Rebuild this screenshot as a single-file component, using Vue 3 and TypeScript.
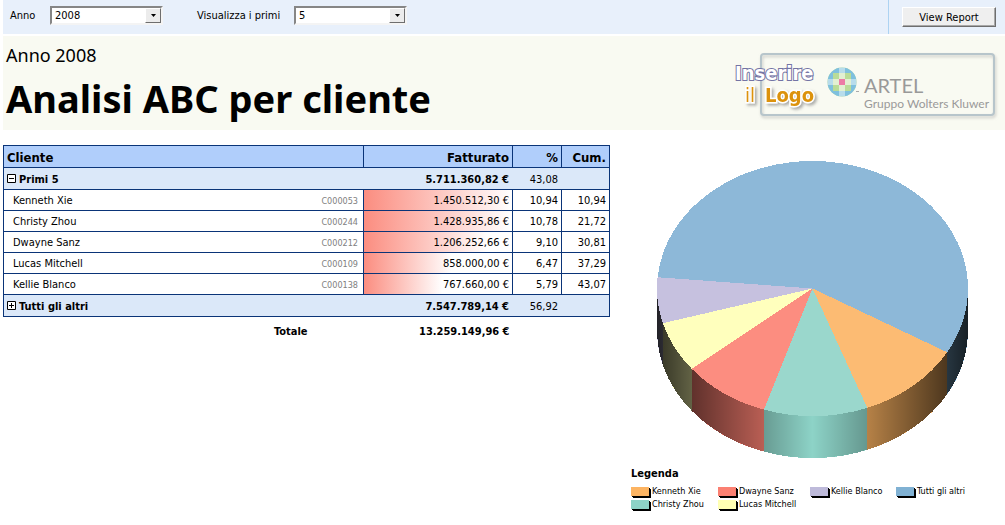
<script setup lang="ts">
import { computed, ref } from 'vue'

interface Customer {
  name: string
  code: string
  revenue: string
  amount: number
  share: string
  cumulative: string
  color: string
  top: string
}

const year = ref('2008')
const topCount = ref('5')
const expanded = ref(true)
const othersExpanded = ref(false)

const customers: Customer[] = [
  { name: 'Kenneth Xie', code: 'C000053', revenue: '1.450.512,30 €', amount: 1450512.3, share: '10,94', cumulative: '10,94', color: '#fdb462', top: '#fcbb73' },
  { name: 'Christy Zhou', code: 'C000244', revenue: '1.428.935,86 €', amount: 1428935.86, share: '10,78', cumulative: '21,72', color: '#8dd3c7', top: '#9ad7cc' },
  { name: 'Dwayne Sanz', code: 'C000212', revenue: '1.206.252,66 €', amount: 1206252.66, share: '9,10', cumulative: '30,81', color: '#fb8072', top: '#fc8d80' },
  { name: 'Lucas Mitchell', code: 'C000109', revenue: '858.000,00 €', amount: 858000, share: '6,47', cumulative: '37,29', color: '#ffffb3', top: '#ffffbd' },
  { name: 'Kellie Blanco', code: 'C000138', revenue: '767.660,00 €', amount: 767660, share: '5,79', cumulative: '43,07', color: '#bebada', top: '#c6c1df' },
]

const segments = [
  ...customers.map(({ name, amount, color, top }) => ({ name, amount, color, top })),
  { name: 'Tutti gli altri', amount: 7547789.14, color: '#80b1d3', top: '#8db8d8' },
]

const legendColumns = [segments.slice(0, 2), segments.slice(2, 4), segments.slice(4, 5), segments.slice(5)]

const maxAmount = Math.max(...customers.map((c) => c.amount))
const barWidth = (amount: number) => `${(amount / maxAmount) * 100}%`

// Pie geometry, in viewBox units; angles grow clockwise from the right.
const cx = 155.5
const cy = 127.5
const rx = 155.5
const ry = 127.5
const depth = 42
const startAngle = 30

const point = (deg: number, drop = 0) => {
  const r = (deg * Math.PI) / 180
  return `${(cx + rx * Math.cos(r)).toFixed(2)} ${(cy + drop + ry * Math.sin(r)).toFixed(2)}`
}

const wall = (from: number, to: number) =>
  `M${point(from)} A${rx} ${ry} 0 0 1 ${point(to)} V${cy + depth + ry * Math.sin((to * Math.PI) / 180)} A${rx} ${ry} 0 0 0 ${point(from, depth)} Z`

const slices = computed(() => {
  const total = segments.reduce((sum, s) => sum + s.amount, 0)
  let angle = startAngle
  return segments.map((s) => {
    const from = angle
    const to = from + (s.amount / total) * 360
    angle = to
    const large = to - from > 180 ? 1 : 0
    return {
      ...s,
      face: `M${cx} ${cy} L${point(from)} A${rx} ${ry} 0 ${large} 1 ${point(to)} Z`,
      side: from < 180 ? wall(from, Math.min(to, 180)) : wall(0, startAngle),
    }
  })
})
const front = wall(0, 180)
</script>

<template>
  <div class="report">
    <form class="toolbar" @submit.prevent>
      <div class="params">
        <label for="year">Anno</label>
        <span class="combo">
          <select id="year" v-model="year">
            <option>2008</option>
            <option>2007</option>
          </select>
          <span class="drop" aria-hidden="true"><svg width="7" height="4" viewBox="0 0 7 4"><path d="M1 0H6L3.500 3Z" /></svg></span>
        </span>
        <label for="top" class="second">Visualizza i primi</label>
        <span class="combo">
          <select id="top" v-model="topCount">
            <option>5</option>
            <option>10</option>
          </select>
          <span class="drop" aria-hidden="true"><svg width="7" height="4" viewBox="0 0 7 4"><path d="M1 0H6L3.500 3Z" /></svg></span>
        </span>
      </div>
      <div class="action">
        <button type="submit" class="view">View Report</button>
      </div>
    </form>

    <header class="banner">
      <div>
        <p class="period">Anno {{ year }}</p>
        <h1>Analisi ABC per cliente</h1>
      </div>
      <svg class="logo" width="270" height="76" viewBox="0 0 270 76" role="img" aria-label="Inserire il Logo - ARTEL Gruppo Wolters Kluwer">
        <defs>
          <clipPath id="disc"><circle cx="112" cy="34" r="14.500" /></clipPath>
          <filter id="soft" x="-20%" y="-20%" width="150%" height="150%">
            <feDropShadow dx="2" dy="2" stdDeviation="1.500" flood-color="#777" flood-opacity="0.6" />
          </filter>
          <filter id="faint" x="-5%" y="-10%" width="112%" height="125%">
            <feDropShadow dx="1" dy="2" stdDeviation="1.500" flood-color="#999" flood-opacity="0.5" />
          </filter>
        </defs>
        <rect x="30" y="7" width="233" height="61" rx="3" fill="none" stroke="#b7c5cb" stroke-width="2" filter="url(#faint)" />
        <g transform="translate(-1 1)">
          <g clip-path="url(#disc)">
            <rect x="97" y="19" width="30" height="30" fill="#b9dc98" />
            <path d="M97 19H109V25H103V31H97ZM127 19V31H121V25H115V19ZM97 49V37H103V43H109V49ZM127 49H115V43H121V37H127Z" fill="#7fc0de" />
            <path d="M109 19H115V25H109ZM97 31H103V37H97ZM121 31H127V37H121ZM109 43H115V49H109Z" fill="#b7dceb" />
            <path d="M109 25H115V31H109ZM103 31H109V37H103ZM115 31H121V37H115ZM109 37H115V43H109Z" fill="#e2efd2" />
            <rect x="109" y="31" width="6" height="6" fill="#ec7ba6" />
          </g>
          <path d="M126 43.500H129" stroke="#aaa" />
        </g>
        <text x="133" y="46" class="brand artel">ARTEL</text>
        <text x="133" y="61" class="brand">Gruppo Wolters Kluwer</text>
        <text x="4" y="33" class="insert">Inserire</text>
        <g filter="url(#soft)">
          <text x="14" y="55" class="il">il</text>
          <text x="34" y="55" class="word">Logo</text>
        </g>
      </svg>
    </header>

    <main class="content">
      <table>
        <colgroup>
          <col class="c-name" />
          <col class="c-revenue" />
          <col class="c-share" />
          <col class="c-cum" />
        </colgroup>
        <thead>
          <tr>
            <th scope="col" class="left">Cliente</th>
            <th scope="col">Fatturato</th>
            <th scope="col">%</th>
            <th scope="col">Cum.</th>
          </tr>
        </thead>
        <tbody>
          <tr class="group">
            <td class="left">
              <button type="button" class="toggle" :aria-expanded="expanded" aria-label="Primi 5" @click="expanded = !expanded">
                <svg width="9" height="9" viewBox="0 0 9 9"><path d="M.5.5H8.500V8.500H.5Z" /><path :d="expanded ? 'M2 4.500H7' : 'M2 4.500H7M4.500 2V7'" /></svg>
              </button>
              <b>Primi 5</b>
            </td>
            <td><b>5.711.360,82 €</b></td>
            <td>43,08</td>
            <td></td>
          </tr>
          <template v-if="expanded">
            <tr v-for="c in customers" :key="c.code">
              <td class="customer">
                <div><span>{{ c.name }}</span><span class="code">{{ c.code }}</span></div>
              </td>
              <td class="revenue" :style="{ backgroundSize: barWidth(c.amount) + ' 100%' }">{{ c.revenue }}</td>
              <td>{{ c.share }}</td>
              <td>{{ c.cumulative }}</td>
            </tr>
          </template>
          <tr class="group">
            <td class="left">
              <button type="button" class="toggle" :aria-expanded="othersExpanded" aria-label="Tutti gli altri" @click="othersExpanded = !othersExpanded">
                <svg width="9" height="9" viewBox="0 0 9 9"><path d="M.5.5H8.500V8.500H.5Z" /><path :d="othersExpanded ? 'M2 4.500H7' : 'M2 4.500H7M4.500 2V7'" /></svg>
              </button>
              <b>Tutti gli altri</b>
            </td>
            <td><b>7.547.789,14 €</b></td>
            <td>56,92</td>
            <td></td>
          </tr>
        </tbody>
        <tfoot>
          <tr>
            <th scope="row" class="total">Totale</th>
            <td><b>13.259.149,96 €</b></td>
            <td></td>
            <td></td>
          </tr>
        </tfoot>
      </table>

      <section class="chart" aria-label="Fatturato per cliente">
        <svg class="pie" viewBox="0 0 311 297" shape-rendering="crispEdges">
          <defs>
            <linearGradient id="shade" gradientUnits="userSpaceOnUse" x1="0" y1="0" x2="311" y2="0">
              <stop offset="0" stop-opacity="0.82" />
              <stop offset="0.02" stop-opacity="0.77" />
              <stop offset="0.11" stop-opacity="0.62" />
              <stop offset="0.345" stop-opacity="0.26" />
              <stop offset="0.5" stop-opacity="0" />
              <stop offset="0.675" stop-opacity="0.28" />
              <stop offset="0.93" stop-opacity="0.69" />
              <stop offset="1" stop-opacity="0.82" />
            </linearGradient>
          </defs>
          <path v-for="s in slices" :key="'side-' + s.name" :d="s.side" :fill="s.color" />
          <path :d="front" fill="url(#shade)" />
          <path v-for="s in slices" :key="s.name" :d="s.face" :fill="s.top" />
        </svg>
        <h2>Legenda</h2>
        <div class="legend">
          <ul v-for="(column, i) in legendColumns" :key="i">
            <li v-for="s in column" :key="s.name">
              <span class="swatch" :style="{ backgroundColor: s.color }"></span>{{ s.name }}
            </li>
          </ul>
        </div>
      </section>
    </main>
  </div>
</template>

<style>
body {
  margin: 0;
  background: #fff;
}
</style>

<style scoped>
.report {
  padding-left: 3px;
  font: 11px/14px "DejaVu Sans Condensed", "DejaVu Sans", sans-serif;
  color: #000;
}
.toolbar {
  display: flex;
  height: 34px;
  background: #e8f0fb;
}
.params {
  display: flex;
  flex: 1;
  align-items: flex-start;
  padding: 6px 0 0 7px;
}
.params label {
  width: 40px;
  line-height: 20px;
  white-space: nowrap;
}
.params .second {
  width: 97px;
  margin-left: 34px;
}
.combo {
  position: relative;
  width: 113px;
  height: 19px;
}
select {
  appearance: none;
  width: 100%;
  height: 19px;
  padding: 0 20px 0 3px;
  border: 2px solid;
  border-color: #868686 #f4f4f4 #f4f4f4 #868686;
  border-radius: 0;
  background: #fff;
  color: #000;
  font: inherit;
}
.drop {
  position: absolute;
  top: 2px;
  right: 2px;
  display: flex;
  align-items: center;
  justify-content: center;
  width: 16px;
  height: 15px;
  box-sizing: border-box;
  border: 1px solid;
  border-color: #fff #6e6e6e #6e6e6e #fff;
  background: #ececec;
  pointer-events: none;
}
.action {
  box-sizing: border-box;
  width: 117px;
  padding: 7px 0 0 13px;
  border-left: 1px solid #add3f2;
}
.view {
  width: 94px;
  height: 20px;
  padding: 1px 0 0;
  border: 1px solid;
  border-color: #fff #6e6e6e #6e6e6e #fff;
  border-radius: 0;
  box-shadow: inset -1px -1px #a8a8a8;
  background: #efefef;
  color: #000;
  font: inherit;
}
.banner {
  display: flex;
  justify-content: space-between;
  box-sizing: border-box;
  height: 94px;
  margin-top: 2px;
  padding: 7px 4px 0 3px;
  background: #f9faf2;
  font-family: "Noto Sans", "Open Sans", sans-serif;
}
.period {
  margin: 0;
  font-size: 18px;
  line-height: 24px;
}
h1 {
  margin: 7px 0 0;
  font-size: 38px;
  line-height: 48px;
  font-weight: 700;
  white-space: nowrap;
}
.logo {
  flex: none;
  margin-top: 4px;
}
.brand {
  fill: #999;
  font: 12px Lato, sans-serif;
}
.artel {
  font-size: 20px;
}
.insert {
  fill: #fff;
  stroke: #7474a4;
  stroke-width: 2px;
  paint-order: stroke;
  font: 700 20px "DejaVu Sans Condensed", sans-serif;
}
.il,
.word {
  fill: #dc9208;
  stroke: #fff;
  stroke-width: 3px;
  paint-order: stroke;
  font: 20px "DejaVu Sans Condensed", sans-serif;
}
.word {
  font-weight: 700;
}
.content {
  display: grid;
  grid-template-columns: minmax(0, 607fr) minmax(0, 395fr);
  align-items: start;
  padding-top: 15px;
}
table {
  width: 100%;
  table-layout: fixed;
  border-collapse: collapse;
}
.c-revenue {
  width: 149px;
}
.c-share {
  width: 49px;
}
.c-cum {
  width: 48px;
}
th,
td {
  height: 18px;
  padding: 2px 3px 0;
  border: 1px solid #0a3478;
  text-align: right;
  white-space: nowrap;
}
th {
  height: 19px;
  background: #b0cefb;
  font-size: 13px;
}
.group td {
  height: 19px;
  border-left-color: transparent;
  border-right-color: transparent;
  background: #dbe8f9;
}
.group td:first-child {
  border-left-color: #0a3478;
}
.group td:last-child {
  border-right-color: #0a3478;
}
.left {
  text-align: left;
}
.toggle {
  width: 9px;
  height: 9px;
  margin: 0 3px 0 0;
  padding: 0;
  border: 0;
  background: #fff;
  vertical-align: 0;
}
.toggle svg {
  display: block;
  fill: none;
  stroke: #000;
}
.customer div {
  display: flex;
  justify-content: space-between;
  padding: 0 2px 0 6px;
}
.code {
  color: #808080;
  font-size: 9px;
}
.revenue {
  background: linear-gradient(90deg, #fb8d80, #fff) no-repeat left;
}
tfoot th,
tfoot td {
  height: 26px;
  border: 0;
  background: none;
  font-size: 11px;
}
tfoot .total {
  padding-right: 56px;
}
.chart {
  padding: 16px 37px 0 21px;
}
.pie {
  display: block;
  box-sizing: border-box;
  width: 100%;
  padding-left: 26px;
}
h2 {
  margin: 9px 0 4px;
  font-size: 11px;
  line-height: 14px;
}
.legend {
  display: grid;
  grid-template-columns: 87px 92px 86px auto;
  font-size: 9px;
  line-height: 13px;
  white-space: nowrap;
}
.legend ul {
  margin: 0;
  padding: 0;
  list-style: none;
}
.legend li {
  display: flex;
  align-items: center;
  gap: 3px;
}
.swatch {
  width: 18px;
  height: 9px;
  box-shadow: 1px 1px #000, 2px 2px #000;
}
</style>
